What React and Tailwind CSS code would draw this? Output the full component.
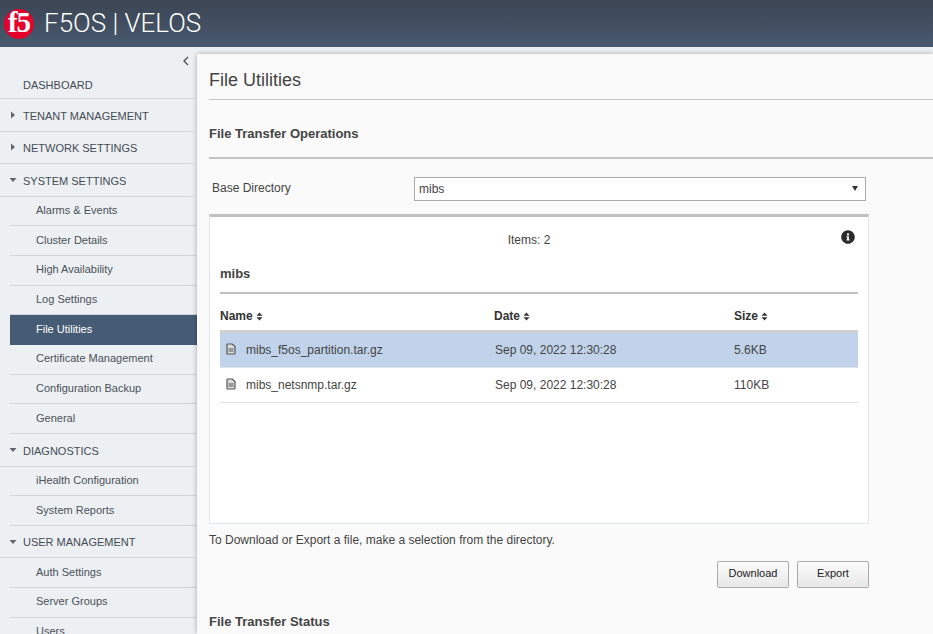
import { FaInfoCircle } from "react-icons/fa";

const font = "font-['Liberation_Sans',Arial,sans-serif]";

function Caret({ open }) {
  return (
    <svg width="8" height="8" viewBox="0 0 8 8" className="absolute left-[9px] top-1/2 -translate-y-1/2">
      {open ? <path d="M0.5 2h7L4 6z" fill="#5d6570" /> : <path d="M2 0.5v7L6 4z" fill="#5d6570" />}
    </svg>
  );
}

function TopItem({ label, caret, open, height = "h-[32.5px]" }) {
  return (
    <div className={`relative flex items-center pl-[23px] pt-[2px] ${height} text-[11px] text-[#444b54] border-b border-[#cfd5db] mr-[2px]`}>
      {caret && <Caret open={open} />}
      {label}
    </div>
  );
}

function SubItem({ label, active }) {
  if (active) {
    return (
      <div className="flex items-center ml-[10px] pl-[26px] pb-[1.5px] h-[29.7px] text-[11px] text-white bg-[#465c75]">
        {label}
      </div>
    );
  }
  return (
    <div className="flex items-center ml-[10px] pl-[26px] pb-[1.5px] h-[29.7px] text-[11px] text-[#4a5159] border-b border-[#cfd5db]">
      {label}
    </div>
  );
}

function Sidebar() {
  return (
    <div className="w-[197px] shrink-0 bg-[#edf0f3] overflow-hidden">
      <div className="flex justify-end pr-[8px] pt-[9px] h-[23px]">
        <svg width="6" height="10" viewBox="0 0 6 10">
          <path d="M5 1L1 5l4 4" fill="none" stroke="#444b54" strokeWidth="1.3" />
        </svg>
      </div>
      <TopItem label="DASHBOARD" height="h-[29px]" />
      <TopItem label="TENANT MANAGEMENT" caret />
      <TopItem label="NETWORK SETTINGS" caret />
      <TopItem label="SYSTEM SETTINGS" caret open />
      <SubItem label="Alarms & Events" />
      <SubItem label="Cluster Details" />
      <SubItem label="High Availability" />
      <SubItem label="Log Settings" />
      <SubItem label="File Utilities" active />
      <SubItem label="Certificate Management" />
      <SubItem label="Configuration Backup" />
      <SubItem label="General" />
      <TopItem label="DIAGNOSTICS" caret open />
      <SubItem label="iHealth Configuration" />
      <SubItem label="System Reports" />
      <TopItem label="USER MANAGEMENT" caret open />
      <SubItem label="Auth Settings" />
      <SubItem label="Server Groups" />
      <SubItem label="Users" />
    </div>
  );
}

function SortIcon() {
  return (
    <svg width="7" height="9" viewBox="0 0 7 9" className="ml-[3px] mt-[1px]">
      <path d="M3.5 0.5L6.5 3.8H0.5zM3.5 8.5L0.5 5.2H6.5z" fill="#333" />
    </svg>
  );
}

function FileIcon() {
  return (
    <svg width="10" height="12" viewBox="0 0 10 12" className="mr-[10px] -mt-[3px]">
      <path d="M1.8 1h4.4L9 3.6v6.6c0 .5-.3.8-.8.8H1.8c-.5 0-.8-.3-.8-.8V1.8c0-.5.3-.8.8-.8z" fill="#dcdcdc" stroke="#555" strokeWidth="1.2" />
      <path d="M2.5 6h5M2.5 8h5" stroke="#555" strokeWidth="1" />
    </svg>
  );
}

function FileRow({ name, date, size, selected }) {
  return (
    <div className={`flex items-center h-[35px] text-[12px] text-[#444] border-b ${selected ? "bg-[#c0d3ea] border-[#dfe3e8]" : "border-[#dcdfe3]"}`}>
      <div className="w-[275px] flex items-center pl-[6px]">
        <FileIcon />
        {name}
      </div>
      <div className="w-[239px]">{date}</div>
      <div>{size}</div>
    </div>
  );
}

function HeaderCell({ label, className }) {
  return (
    <div className={`flex items-center ${className}`}>
      {label}
      <SortIcon />
    </div>
  );
}

export default function App() {
  return (
    <div className={`${font} w-[933px] h-[634px] overflow-hidden flex flex-col bg-[#edf0f3]`}>
      <div className="h-[47px] shrink-0 flex items-center pl-[4px] bg-gradient-to-b from-[#3c4553] to-[#48596f]">
        <div className="w-[30px] h-[30px] rounded-full bg-[#e4002b] flex items-center justify-center text-white font-['Liberation_Serif',serif] font-bold text-[29px] leading-none tracking-[-1px] pb-[3px]">
          f5
        </div>
        <div className="ml-[10px] font-['Roboto',sans-serif] font-light text-[26px] text-white">
          F5OS | VELOS
        </div>
      </div>

      <div className="flex-1 flex min-h-0">
        <Sidebar />
        <div className="flex-1 mt-[7px] bg-[#fafafa] shadow-[0_0_5px_rgba(0,0,0,0.3)] pl-[12px] overflow-hidden">
          <div className="h-[46px] flex items-center text-[18px] text-[#444] border-b border-[#c4c4c4] pt-[8px]">
            File Utilities
          </div>
          <div className="h-[59px] flex items-center text-[13px] font-bold text-[#444] border-b-2 border-[#c4c4c4] pt-[11px]">
            File Transfer Operations
          </div>

          <div className="w-[660px]">
            <div className="flex items-center mt-[18px] ml-[3px] mr-[3px]">
              <div className="w-[202px] text-[12px] text-[#444] -mt-[3px]">Base Directory</div>
              <div className="flex-1 h-[24px] flex items-center justify-between bg-white border border-[#aaa] pl-[4px] pr-[7px] text-[12px] text-[#444]">
                mibs
                <svg width="6" height="5" viewBox="0 0 6 5" className="-mt-[1px]">
                  <path d="M0 0h6L3 5z" fill="#333" />
                </svg>
              </div>
            </div>

            <div className="mt-[13px] h-[310px] bg-white border-t-[3px] border-t-[#c0c0c0] border-x border-b border-x-[#e2e7ec] border-b-[#e2e7ec] relative px-[10px]">
              <div className="text-center text-[12px] text-[#444] pt-[16px] leading-[14px] pr-[20px]">Items: 2</div>
              <FaInfoCircle className="absolute right-[13px] top-[13px] text-[#2b2b2b] text-[14px]" />
              <div className="mt-[19px] text-[13px] font-bold text-[#444] leading-[16px] pb-[10px] border-b-2 border-[#c0c0c0]">
                mibs
              </div>
              <div className="flex items-center h-[39px] pt-[8px] text-[12px] font-bold text-[#333] border-b-[3px] border-[#cfcfcf]">
                <HeaderCell label="Name" className="w-[274px]" />
                <HeaderCell label="Date" className="w-[240px]" />
                <HeaderCell label="Size" />
              </div>
              <FileRow name="mibs_f5os_partition.tar.gz" date="Sep 09, 2022 12:30:28" size="5.6KB" selected />
              <FileRow name="mibs_netsnmp.tar.gz" date="Sep 09, 2022 12:30:28" size="110KB" />
            </div>

            <div className="mt-[9px] text-[12px] text-[#444] leading-[14px]">
              To Download or Export a file, make a selection from the directory.
            </div>

            <div className="mt-[14px] flex justify-end gap-[8px]">
              <button className="w-[72px] h-[27px] pb-[2px] rounded-[2px] border border-[#aaa] bg-gradient-to-b from-[#fafafa] to-[#e8e8e8] text-[11px] text-[#222]">
                Download
              </button>
              <button className="w-[72px] h-[27px] pb-[2px] rounded-[2px] border border-[#aaa] bg-gradient-to-b from-[#fafafa] to-[#e8e8e8] text-[11px] text-[#222]">
                Export
              </button>
            </div>

            <div className="mt-[26px] text-[13px] font-bold text-[#444] leading-[16px]">File Transfer Status</div>
          </div>
        </div>
      </div>
    </div>
  );
}
